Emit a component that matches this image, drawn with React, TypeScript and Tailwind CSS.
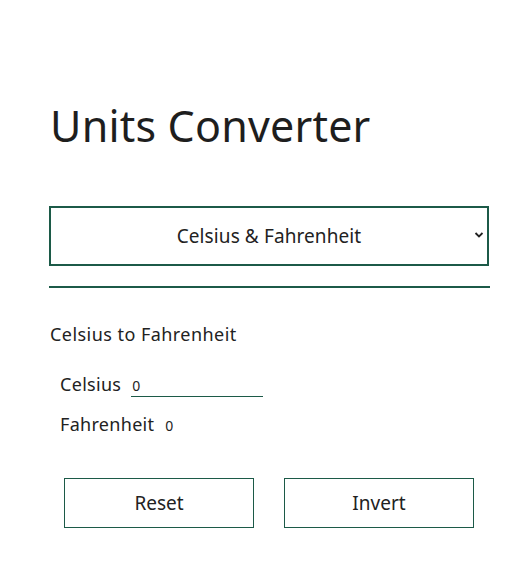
import React, { useState } from "react";

const App: React.FC = () => {
  const [celsius, setCelsius] = useState("0");

  return (
    <div
      className="min-h-[584px] w-[520px] bg-white text-[#222]"
      style={{ fontFamily: '"Noto Sans", "Open Sans", sans-serif' }}
    >
      <div className="w-[441px] ml-[49px] pt-[92px]">
        {/* Title */}
        <h1 className="text-[43px] leading-[68px] text-[#1e1e1e] ml-[1px] tracking-[0.2px]">Units Converter</h1>

        {/* Select */}
        <div className="relative mt-[46px]">
          <select
            className="w-[440px] h-[60px] border-2 border-[#1c5a48] bg-white text-center text-[19px] tracking-[0.1px] text-[#222] appearance-none outline-none"
            defaultValue="cf"
          >
            <option value="cf">Celsius &amp; Fahrenheit</option>
            <option value="km">Kilometers &amp; Miles</option>
          </select>
          <svg
            className="absolute right-[6px] top-[25px] pointer-events-none"
            width="10"
            height="8"
            viewBox="0 0 10 8"
          >
            <path d="M1.5 2 L5 5.5 L8.5 2" fill="none" stroke="#222" strokeWidth="1.8" />
          </svg>
        </div>

        <div className="mt-[20px] h-[2px] bg-[#1c5a48]" />

        {/* Converter */}
        <section className="mt-[33px]">
          <h2 className="text-[18px] leading-[26px] text-[#222] ml-[1px] tracking-[0.45px]">Celsius to Fahrenheit</h2>

          <div className="flex items-end ml-[11px] mt-[24px]">
            <label className="text-[18px] leading-[26px] tracking-[0.3px]">Celsius</label>
            <input
              value={celsius}
              onChange={(e) => setCelsius(e.target.value)}
              className="ml-[10px] w-[132px] h-[22px] border-b border-[#1c5a48] text-[14px] leading-[20px] outline-none px-[1px]"
            />
          </div>

          <div className="flex items-end ml-[11px] mt-[14px]">
            <span className="text-[18px] leading-[26px] tracking-[0.3px]">Fahrenheit</span>
            <span className="ml-[11px] text-[14px] leading-[22px]">0</span>
          </div>
        </section>

        {/* Buttons */}
        <div className="flex gap-[30px] ml-[15px] mt-[41px]">
          <button
            onClick={() => setCelsius("0")}
            className="w-[190px] h-[50px] border border-[#1c5a48] bg-white text-[19px] text-[#222]"
          >
            Reset
          </button>
          <button className="w-[190px] h-[50px] border border-[#1c5a48] bg-white text-[19px] text-[#222]">
            Invert
          </button>
        </div>
      </div>
    </div>
  );
};

export default App;
